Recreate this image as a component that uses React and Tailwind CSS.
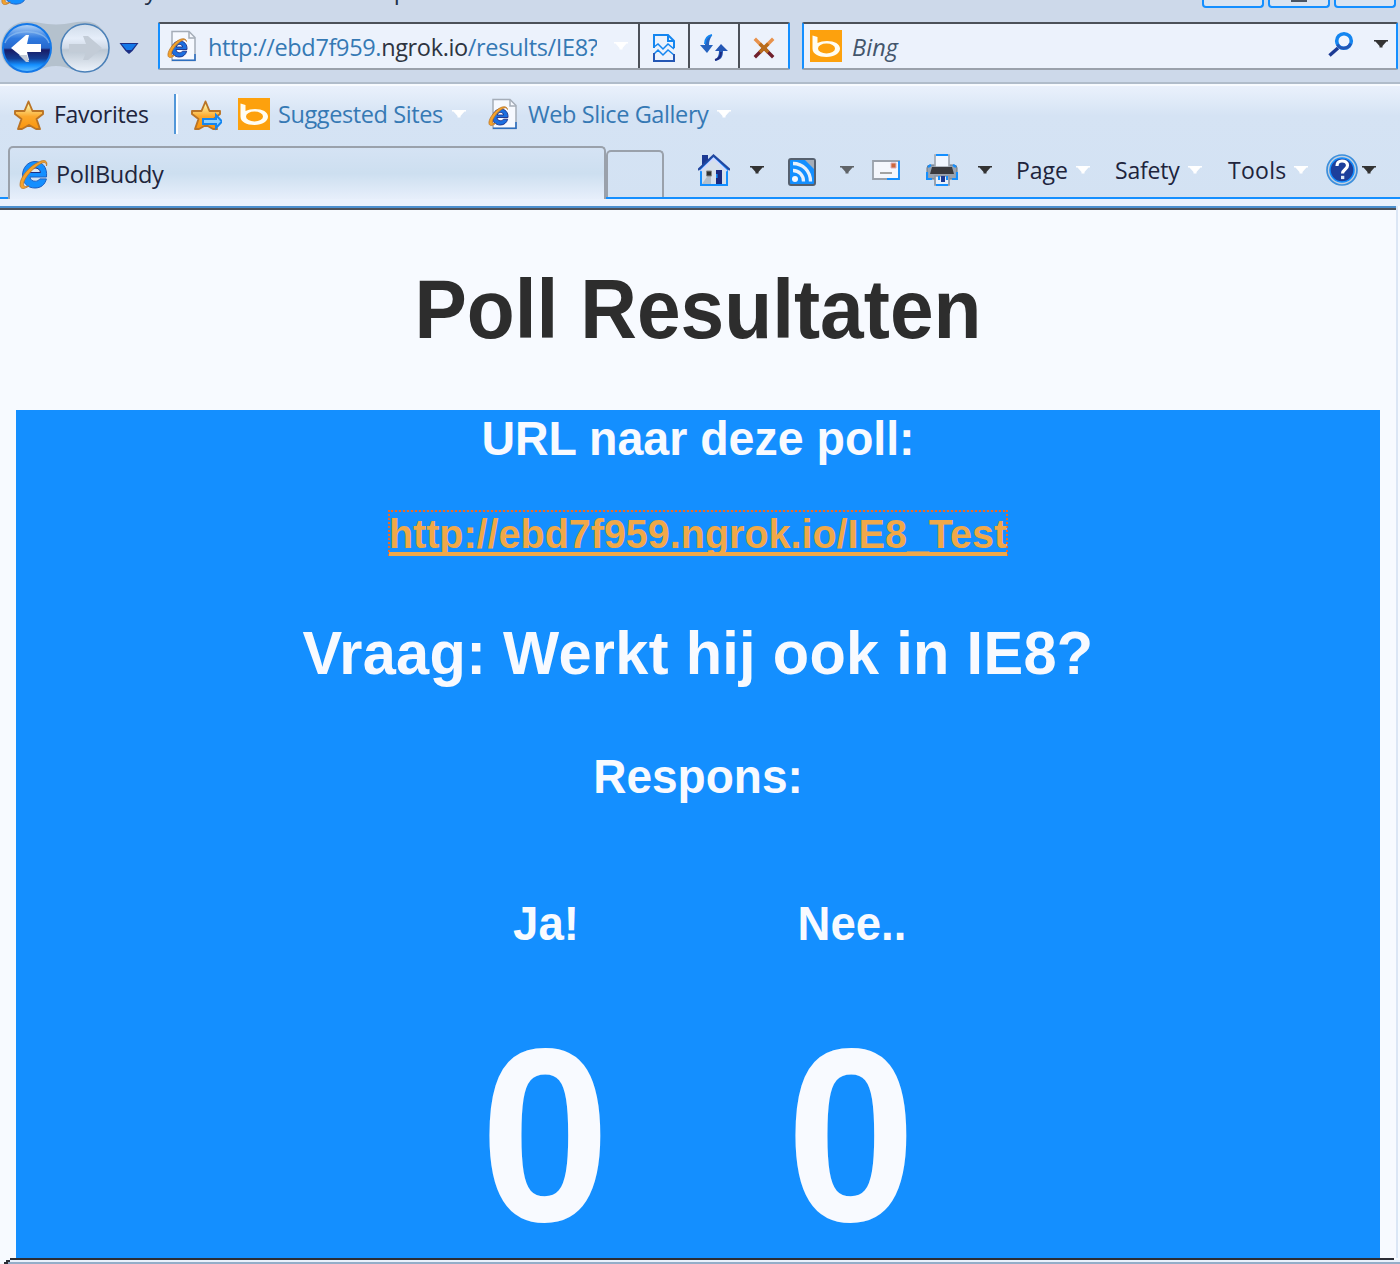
import React from "react";

const Ie = ({ className }) => (
  <svg viewBox="0 0 32 32" className={className}>
    <path d="M28.500 19H12c.3 3 2.300 4.200 5.200 4.200 2.200 0 3.800-.9 4.600-2.300h6.600C27 26.600 23 30 17 30 9.500 30 4.500 25 4.500 17.500 4.500 9.500 10 3.500 17 3.500 24.500 3.500 29.500 9.500 28.500 19z" fill="#148fff" stroke="#1d5fc0" strokeWidth="1" />
    <path d="M11.500 14.500h11c-.5-2.900-2.600-4.500-5.400-4.500s-5 1.600-5.600 4.500z" fill="#dce8f7" stroke="#1c2f85" />
    <path d="M28.500 8c1.500-5-2-7-7.500-4C12 7.500 2 19 2 26.500c0 5 4 5 9 1.500-3.500 1.200-5.800.6-5.500-2.500C6.500 19 17 8 24 5c3-1.200 4.500 0 4.500 3z" fill="#f5a32b" stroke="#b9752a" strokeWidth=".8" />
  </svg>
);

const IePage = ({ className }) => (
  <svg viewBox="0 0 32 32" className={className}>
    <path d="M6 1.500h17l6 6v23H6z" fill="#f6f9ff" stroke="#a5adb8" strokeWidth="1.500" />
    <path d="M23 2v6h6" fill="none" stroke="#a5adb8" strokeWidth="1.500" />
    <path d="M6 30.200h23V24" fill="none" stroke="#2d6fc0" strokeWidth="1.600" />
    <path d="M21 19.500H10c.2 2.300 1.500 3.200 3.500 3.200 1.400 0 2.500-.5 3-1.500h4.200c-1 3.600-3.700 5.800-7.400 5.800-4.700 0-7.600-3.200-7.600-7.500C5.700 14.700 9 11 13.500 11c4.800 0 7.900 3.300 7.500 8.500zM10.300 17h6.300c-.3-1.700-1.400-2.600-3-2.600-1.700 0-2.900.9-3.300 2.600z" fill="#1c6fe0" fillRule="evenodd" stroke="#1c2f85" strokeWidth=".9" />
    <path d="M20.500 11.500c-.5-4-6-3.500-10.500.5C5 16 1.500 22 2 25.500c.3 2.700 3.500 2.500 6.500 0-2.500.5-3.500-.2-3-2.500C6.500 18.500 13.500 11 17.500 9.800c1.500-.3 2.500.2 3 1.700z" fill="#f5a32b" stroke="#b9752a" strokeWidth=".8" />
  </svg>
);

const Bing = ({ className }) => (
  <svg viewBox="0 0 32 32" className={className}>
    <path d="M0 0h32v32H0z" fill="#fda10d" />
    <path d="M2.500 5.500l5 1.500V13c2.500-1.300 6-2 9.500-2 7.500 0 13 3 13 7.500S24.500 27 16.500 27 2.500 24 2.500 18.500z" fill="#fffdf2" />
    <ellipse cx="16.500" cy="18.500" rx="8.500" ry="5" fill="#fda10d" />
  </svg>
);

const Star = ({ arrow, className }) => (
  <svg viewBox="0 0 32 32" className={className}>
    <defs>
      <linearGradient id="gold" x1="0" y1="0" x2="0" y2="1">
        <stop offset=".15" stopColor="#fdf0a0" />
        <stop offset=".55" stopColor="#fba72c" />
        <stop offset="1" stopColor="#fb950c" />
      </linearGradient>
    </defs>
    <path d="M15.500 2.500l4 9.500h10.500v3L23.500 20 27 30h-4l-7-4-7 4H5l3.500-10L2 15v-3h9.500z" fill="url(#gold)" stroke="#ba7426" strokeWidth="1.900" strokeLinejoin="round" />
    {arrow && <path d="M13 20h13v-4l6 6.500-6 6.500v-4H13z" fill="#8fd0ff" stroke="#1486f0" strokeWidth="2" />}
  </svg>
);

const Caret = ({ className }) => (
  <svg viewBox="0 0 14 8" className={"h-2 w-3.5 shrink-0 " + className}>
    <path d="M0 0h14v1.500h-1.500L8.500 6v1.500h-3V6l-4-4.500H0z" fill="currentColor" />
  </svg>
);

const NavButtons = () => (
  <svg viewBox="0 0 142 56" className="h-14 w-[142px] shrink-0">
    <defs>
      <linearGradient id="back" x1="0" y1="0" x2="0" y2="1">
        <stop offset="0" stopColor="#b7d6f7" />
        <stop offset=".3" stopColor="#2f7ae0" />
        <stop offset=".5" stopColor="#2668cc" />
        <stop offset=".54" stopColor="#191c66" />
        <stop offset=".72" stopColor="#153f94" />
        <stop offset=".85" stopColor="#148fff" />
        <stop offset="1" stopColor="#6cc4ff" />
      </linearGradient>
      <linearGradient id="fwd" x1="0" y1="0" x2="0" y2="1">
        <stop offset="0" stopColor="#cfdbe9" />
        <stop offset=".3" stopColor="#e6eefa" />
        <stop offset=".5" stopColor="#cfd9e6" />
        <stop offset=".54" stopColor="#bcc7d3" />
        <stop offset="1" stopColor="#eef4fc" />
      </linearGradient>
    </defs>
    <path d="M27 2.500c12 0 15 3 29 3s16-3 29-3c14 0 24 12 24 27S98 53 85 53c-12 0-16-6-29-6s-17 6-29 6C12 53 1 44 1 29.500S12 2.500 27 2.500z" fill="#aebac6" opacity=".8" />
    <circle cx="27" cy="29" r="24" fill="url(#back)" stroke="#1478e8" strokeWidth="2" />
    <path d="M5 24C9 9 45 9 49 24" fill="none" stroke="#8fbdf0" strokeWidth="1.500" opacity=".7" />
    <path d="M11 29L26 16h3l-2 9h14v8H27l2 8h-3z" fill="#fff" />
    <path d="M19 36l8 0 2 7h-3z" fill="#c3cbd6" />
    <circle cx="85" cy="29" r="24" fill="url(#fwd)" stroke="#4a80b8" strokeWidth="1.600" />
    <path d="M102 29L88 17h-5l3 8H69v8h17l-3 8h5z" fill="#c3ccd7" />
    <path d="M119.500 24h19l-6 8-3.500 3-3.500-3z" fill="#1c2f85" />
    <path d="M121.500 25h15l-5 6h-5z" fill="#1478e8" />
  </svg>
);

const Compat = () => (
  <svg viewBox="0 0 22 28" className="h-7 w-[22px]" fill="none" stroke="#1486f0" strokeWidth="2">
    <path d="M1 14V1h14l6 6v7" />
    <path d="M15 1v6h6" />
    <path d="M1 13l4-3 5 5 5-5 6 5M1 20l4-4 5 5 5-5 6 5" strokeWidth="1.500" />
    <path d="M1 19v8h20v-7" stroke="#2457b5" />
  </svg>
);

const Refresh = () => (
  <svg viewBox="0 0 28 28" className="size-7">
    <path d="M12 1C7 2 5 5 5 11H0l7 8 6-8H9c0-4 1-6 3-10z" fill="#2563c0" />
    <path d="M12 1C7 2 5 5 5 10" fill="none" stroke="#1486f0" strokeWidth="2" />
    <path d="M15 27c6-1 8-4 8-10h5l-7-7-6 7h4c0 4-1 6-4 10z" fill="#2457b5" />
    <path d="M15 26c4-1 6-4 6-8" fill="none" stroke="#1b2a80" strokeWidth="2" />
  </svg>
);

const Stop = () => (
  <svg viewBox="0 0 22 22" className="size-[22px]" strokeLinecap="square" strokeWidth="3.400">
    <path d="M3 19l7-7M19 19l-7-7" stroke="#70202c" />
    <path d="M3 3l8 8 8-8" stroke="#e8924c" fill="none" />
    <path d="M8 14l3-3 3 3M8 8l3 3 3-3" stroke="#b96d1d" fill="none" />
  </svg>
);

const Search = () => (
  <svg viewBox="0 0 26 26" className="size-[26px]">
    <path d="M1.500 24.500L10 17" stroke="#1c3a93" strokeWidth="3.500" />
    <circle cx="16" cy="10" r="7.300" fill="#f0f5fd" stroke="#1486f0" strokeWidth="3.600" />
    <path d="M9.500 13.500c2 5 11 5 13-1" fill="none" stroke="#2457b5" strokeWidth="3" />
  </svg>
);

const House = () => (
  <svg viewBox="0 0 32 32" className="size-8">
    <path d="M4 1h6v11H4z" fill="#1c3a93" />
    <path d="M3 15L16 3l13 12v16H3z" fill="#d6e0ec" stroke="#148fff" strokeWidth="2" />
    <path d="M4 30l9-13v13z" fill="#b5bfca" />
    <path d="M0 16L15.500 1.500 32 16" fill="none" stroke="#2347a0" strokeWidth="2.200" />
    <path d="M2.500 17L15.500 4.500 29 17" fill="none" stroke="#d4d7ff" strokeWidth="1.700" />
    <path d="M8.500 17h5v5h-5z" fill="#333" stroke="#888" />
    <path d="M18 16h6v14h-6z" fill="#1b2a80" />
    <path d="M18.800 20v4" stroke="#148fff" strokeWidth="1.500" />
  </svg>
);

const Feed = () => (
  <svg viewBox="0 0 28 28" className="size-7">
    <rect x="1" y="1" width="26" height="26" rx="2" fill="#148fff" stroke="#56606e" strokeWidth="2" />
    <path d="M17 2h9v9z" fill="#a5adb8" />
    <circle cx="7" cy="21" r="3" fill="#f4f8ff" />
    <path d="M5 12.500c6 0 10.500 4.500 10.500 11M5 5.500c10 0 17.500 7.500 17.500 18" fill="none" stroke="#e8f0fb" strokeWidth="3.300" />
  </svg>
);

const Mail = () => (
  <svg viewBox="0 0 28 20" className="h-5 w-7">
    <path d="M1 1h26v18H1z" fill="#f4f7fd" stroke="#9aa1ab" strokeWidth="1.800" />
    <path d="M27 1v18H15" fill="none" stroke="#148fff" strokeWidth="1.800" />
    <path d="M8 13h12" stroke="#999" strokeWidth="1.800" />
    <path d="M19 3h5v5h-5z" fill="#cc683b" stroke="#ddb0ba" />
  </svg>
);

const Printer = () => (
  <svg viewBox="0 0 32 32" className="size-8">
    <rect x="1" y="11" width="30" height="14" rx="3" fill="#9aa3af" stroke="#6b7684" />
    <path d="M9 1h14v12H9z" fill="#f1f6fe" stroke="#a2a9b3" strokeWidth="1.700" />
    <path d="M10 1h12" stroke="#148fff" strokeWidth="2" />
    <path d="M6 13h20l2 7H4z" fill="#3a3a3e" />
    <path d="M1 18v7h5M31 18v7h-5M2 13l3-2M30 13l-3-2" fill="none" stroke="#148fff" strokeWidth="2.200" />
    <path d="M9 22h14v9H9z" fill="#e8f0fb" stroke="#8d97a4" strokeWidth="1.700" />
    <path d="M10 31h12M13 22v4M21 22v4" stroke="#148fff" strokeWidth="2" />
    <path d="M15 22h4v6h-4z" fill="#1c3a93" />
  </svg>
);

const Help = () => (
  <svg viewBox="0 0 32 32" className="size-8">
    <circle cx="16" cy="16" r="15" fill="#c3d0df" stroke="#3d8fdc" strokeWidth="1.700" />
    <circle cx="16" cy="16" r="12" fill="#1d3f9b" stroke="#148fff" strokeWidth="1.500" />
    <path d="M11 12c0-3.500 2-5 5-5s5.500 1.500 5.500 4.500c0 4-5 4-5 8" fill="none" stroke="#fff" strokeWidth="3.200" />
    <path d="M15 21.800h3.300v3.300H15z" fill="#dce8f7" />
  </svg>
);

const WinButton = ({ children, className }) => (
  <div className={"flex h-2 justify-center rounded-b-[4px] border-2 border-t-0 border-[#148fff] bg-[#d9e4f2] " + className}>{children}</div>
);

export default function App() {
  return (
    <div className="flex h-[1264px] w-[1400px] flex-col overflow-hidden bg-[#f7faff] font-['Open_Sans','Noto_Sans',sans-serif] text-[24px] leading-8 whitespace-nowrap">
      <header className="flex h-[82px] shrink-0 flex-col bg-[#cdd9ea]">
        <div className="flex h-[22px] items-start">
          <Ie className="-mt-6 size-[30px] shrink-0" />
          <div className="-mt-[26px] w-[1172px] pl-[19px] text-[24px] tracking-[-0.6px] text-[#23324a]">PollBuddy - Windows Internet Explorer</div>
          <div className="flex">
            <WinButton className="w-[62px]" />
            <WinButton className="ml-1 w-[62px]"><span className="h-0.5 w-4 bg-[#4b5563]" /></WinButton>
            <WinButton className="ml-1 w-[62px]" />
          </div>
        </div>
        <div className="flex h-12">
          <div className="-mt-[3px] w-[158px] shrink-0"><NavButtons /></div>
          <div className="flex w-[632px] rounded-[2px] border-2 border-[#9aa1ab] border-t-[#4c5159] border-l-[#148fff] border-r-[#148fff] bg-[#ecf2fc]">
            <div className="flex w-[478px] items-center pl-1.5">
              <IePage className="size-8 shrink-0" />
              <span className="ml-2.5 w-[389px] overflow-hidden pt-0.5 text-[23.5px] tracking-[-0.35px] text-[#3579b4]">
                http://ebd7f959.<span className="text-[#2e3440]">ngrok.io</span>/results/IE8?
              </span>
              <Caret className="ml-[17px] text-white" />
            </div>
            <div className="flex w-[50px] items-center justify-center border-l-2 border-[#4c5159] pt-1"><Compat /></div>
            <div className="flex w-[50px] items-center justify-center border-l-2 border-[#4c5159] pt-1"><Refresh /></div>
            <div className="flex w-[50px] items-center justify-center border-l-2 border-[#4c5159] pt-1"><Stop /></div>
          </div>
          <div className="ml-3 flex w-[596px] items-center rounded-[2px] border-2 border-[#9aa1ab] border-t-[#4c5159] border-l-[#148fff] border-r-[#148fff] bg-[#ecf2fc] pl-1.5">
            <Bing className="size-8 shrink-0" />
            <span className="ml-2.5 w-[476px] pt-0.5 text-[23.5px] tracking-[0.1px] text-[#44566c] italic">Bing</span>
            <span className="-mt-1"><Search /></span>
            <Caret className="-mt-1 ml-5 text-[#333]" />
          </div>
        </div>
      </header>

      <div className="h-0.5 shrink-0 bg-[#b0bcca]" />
      <div className="flex h-[122px] shrink-0 flex-col border-t-2 border-[#f8fbff] bg-linear-to-b from-[#eaf1fc] via-[#d5e3f4] via-25% to-[#d3e2f3]">
        <div className="flex h-[60px] items-center pb-1 pl-[13px]">
          <Star className="mt-0.5 size-8" />
          <span className="ml-[9px] w-[120px] text-[23px] tracking-[-0.3px] text-[#20243c]">Favorites</span>
          <div className="mr-3 h-10 w-1 border-r-2 border-l-2 border-l-[#5297d9] border-r-white" />
          <Star arrow className="mt-0.5 size-8" />
          <Bing className="ml-4 size-8" />
          <span className="ml-2 w-[174px] text-[23.5px] tracking-[-0.4px] text-[#3579b4]">Suggested Sites</span>
          <Caret className="text-white" />
          <IePage className="ml-[21px] size-8" />
          <span className="ml-[9px] w-[189px] text-[23.5px] tracking-[-0.4px] text-[#3579b4]">Web Slice Gallery</span>
          <Caret className="text-white" />
        </div>
        <div className="flex h-[53px]">
          <div className="w-2 border-b-2 border-[#148fff]" />
          <div className="flex w-[598px] items-center rounded-t-[5px] border-2 border-b-0 border-[#9aa1ab] bg-linear-to-b from-[#d5e3f4] via-[#cddff0] to-[#e7effb] pl-2">
            <Ie className="size-8" />
            <span className="ml-1.5 text-[23.5px] tracking-[-0.3px] text-[#20243c]">PollBuddy</span>
          </div>
          <div className="flex flex-1 items-end border-b-2 border-[#148fff]">
            <div className="h-[47px] w-[58px] rounded-t-[5px] border-2 border-b-0 border-[#9aa1ab]" />
            <div className="flex h-[54px] items-center pl-[34px] text-[23px] text-[#20243c]">
              <House />
              <Caret className="ml-5 text-[#333]" />
              <span className="mt-1 ml-6"><Feed /></span>
              <Caret className="ml-6 text-[#606468]" />
              <span className="ml-[18px]"><Mail /></span>
              <span className="ml-[26px]"><Printer /></span>
              <Caret className="ml-5 text-[#333]" />
              <span className="ml-6 w-[60px] tracking-[0px]">Page</span>
              <Caret className="text-white" />
              <span className="ml-[25px] w-[73px] tracking-[-0.2px]">Safety</span>
              <Caret className="text-white" />
              <span className="ml-[26px] w-[66px] tracking-[0.3px]">Tools</span>
              <Caret className="text-white" />
              <span className="ml-[18px]"><Help /></span>
              <Caret className="ml-1 text-[#333]" />
            </div>
          </div>
        </div>
        <div className="h-[7px] bg-[#e9f1fc]" />
      </div>

      <main className="mr-1 h-[1052px] shrink-0 border-t-2 border-t-[#4b8fce] px-4 text-center font-['Liberation_Sans',Arial,sans-serif] font-bold shadow-[2px_0_0_#dbe6f5]">
        <div className="-mx-4 h-0.5 bg-[#4c5159]" />
        <h1 className="h-[200px] pt-[54px] text-[78.500px] leading-[90px] text-[#2d2d2d]"><span className="inline-block scale-y-[1.06]">Poll Resultaten</span></h1>
        <section className="flex h-[848px] flex-col items-center bg-[#148fff] text-[46.500px] leading-[56px] text-[#f8faff]">
          <h2 className="h-[100px] shrink-0"><span className="inline-block scale-y-[1.05]">URL naar deze poll:</span></h2>
          <a className="flex h-[46px] w-[620px] shrink-0 justify-center border-2 border-dotted border-[#f5671d] text-[39.500px] leading-[42px] text-[#f0a848]">
            <span className="h-[44px] border-b-4 border-[#f0a848]"><span className="inline-block scale-y-[1.04]">http://ebd7f959.ngrok.io/IE8_Test</span></span>
          </a>
          <h2 className="mt-[61px] h-[72px] shrink-0 text-[59.500px] leading-[72px] tracking-[0.3px]"><span className="inline-block scale-y-[1.04]">Vraag: Werkt hij ook in IE8?</span></h2>
          <h3 className="mt-[59px] h-14 shrink-0 text-[46px]"><span className="inline-block scale-y-[1.05]">Respons:</span></h3>
          <div className="mt-[92px] grid shrink-0 grid-cols-[306px_306px]">
            <span className="scale-y-[1.06] pl-0.5 text-[45.500px]">Ja!</span>
            <span className="scale-y-[1.06] pl-0.5 text-[45.500px]">Nee..</span>
            <span className="mt-[49px] h-[256px] scale-y-[1.06] text-[233px] leading-[268px]">0</span>
            <span className="mt-[49px] h-[256px] scale-y-[1.06] text-[233px] leading-[268px]">0</span>
          </div>
        </section>
      </main>
      <footer className="flex h-1.5 shrink-0 flex-col">
        <div className="mr-1.5 ml-2.5 h-0.5 bg-[#2b2d35]" />
        <div className="ml-1.5 h-0.5 border-l-4 border-[#2b2d35] bg-[#eaf1fc]" />
        <div className="ml-1 h-0.5 border-l-4 border-[#2b2d35] bg-[#94adc8]" />
      </footer>
    </div>
  );
}
